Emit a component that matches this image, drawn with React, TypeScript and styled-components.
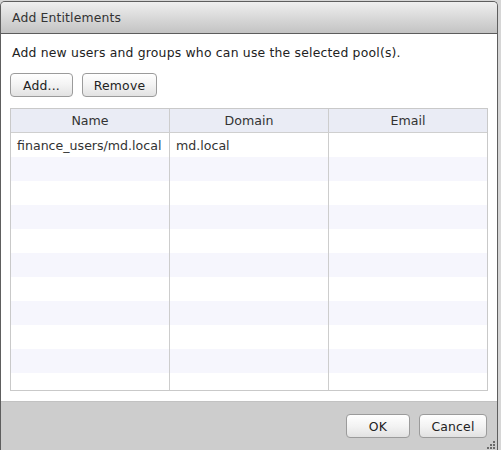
import React from "react";
import styled, { createGlobalStyle } from "styled-components";

const GlobalStyle = createGlobalStyle`
  html, body {
    margin: 0;
    padding: 0;
    background: #d6d6d6;
    font-family: "DejaVu Sans", Verdana, sans-serif;
  }
`;

const Page = styled.div`
  width: 501px;
  height: 450px;
  overflow: hidden;
  padding-top: 1px;
  box-sizing: border-box;
`;

const Dialog = styled.div`
  position: relative;
  width: 498px;
  height: 460px;
  box-sizing: border-box;
  border: 1px solid #5e5e5e;
  border-bottom: none;
  border-radius: 5px 5px 0 0;
  display: flex;
  flex-direction: column;
  overflow: hidden;
`;

const TitleBar = styled.div`
  height: 31px;
  flex: none;
  display: flex;
  align-items: center;
  padding-left: 11px;
  background: linear-gradient(#efefef, #d9d9d9 50%, #c3c3c3);
  border-bottom: 1px solid #5c5c5c;
  font-size: 12.4px;
  letter-spacing: 0.15px;
  color: #333;
`;

const Body = styled.div`
  background: #fff;
  padding: 11px 9px 10px 9px;
  display: flex;
  flex-direction: column;
`;

const Description = styled.p`
  margin: 0 0 0 2px;
  font-size: 12.4px;
  letter-spacing: 0.2px;
  line-height: 16px;
  color: #222;
`;

const ButtonRow = styled.div`
  display: flex;
  gap: 9px;
  margin-top: 12px;
`;

const Button = styled.button<{ $w: number }>`
  width: ${(p) => p.$w}px;
  height: 24px;
  box-sizing: border-box;
  border: 1px solid #9b9b9b;
  border-radius: 4px;
  background: linear-gradient(#ffffff, #f3f3f3 50%, #e2e2e2);
  font-family: "DejaVu Sans", Verdana, sans-serif;
  font-size: 12.4px;
  letter-spacing: 0.2px;
  color: #222;
  padding: 0;
  cursor: pointer;
`;

const Table = styled.div`
  margin-top: 11px;
  height: 283px;
  box-sizing: border-box;
  border: 1px solid #c9c9c9;
  overflow: hidden;
`;

const Row = styled.div<{ $head?: boolean; $alt?: boolean }>`
  display: grid;
  grid-template-columns: 159px 159px 1fr;
  height: 24px;
  box-sizing: border-box;
  background: ${(p) => (p.$head ? "#eaecf5" : p.$alt ? "#f6f6fd" : "#ffffff")};
  border-bottom: ${(p) => (p.$head ? "1px solid #cfcfcf" : "none")};
`;

const Cell = styled.div<{ $head?: boolean; $last?: boolean }>`
  border-right: ${(p) => (p.$last ? "none" : "1px solid #cdcdcd")};
  display: flex;
  align-items: center;
  justify-content: ${(p) => (p.$head ? "center" : "flex-start")};
  padding-left: ${(p) => (p.$head ? "0" : "6px")};
  font-size: 12.6px;
  color: #333;
  white-space: nowrap;
  overflow: hidden;
`;

const Footer = styled.div`
  flex: 1;
  background: #cdcdcd;
  border-top: 1px solid #c2c2c2;
  display: flex;
  justify-content: flex-end;
  align-items: flex-start;
  gap: 9px;
  padding: 12px 10px 0 0;
`;

const Grip = styled.svg`
  position: absolute;
  right: 0;
  top: 438px;
`;

const rows = [
  ["finance_users/md.local", "md.local", ""],
  ...Array.from({ length: 10 }, () => ["", "", ""]),
];

export default function App() {
  return (
    <Page>
      <GlobalStyle />
      <Dialog>
        <TitleBar>Add Entitlements</TitleBar>
        <Body>
          <Description>
            Add new users and groups who can use the selected pool(s).
          </Description>
          <ButtonRow>
            <Button $w={63}>Add...</Button>
            <Button $w={75}>Remove</Button>
          </ButtonRow>
          <Table>
            <Row $head>
              <Cell $head>Name</Cell>
              <Cell $head>Domain</Cell>
              <Cell $head $last>
                Email
              </Cell>
            </Row>
            {rows.map((r, i) => (
              <Row key={i} $alt={i % 2 === 1}>
                <Cell>{r[0]}</Cell>
                <Cell>{r[1]}</Cell>
                <Cell $last>{r[2]}</Cell>
              </Row>
            ))}
          </Table>
        </Body>
        <Footer>
          <Button $w={64}>OK</Button>
          <Button $w={68}>Cancel</Button>
        </Footer>
        <Grip width="11" height="11" viewBox="0 0 11 11">
          <g fill="#6a6a6a">
            <rect x="7" y="1" width="2" height="2" />
            <rect x="4" y="4" width="2" height="2" />
            <rect x="7" y="4" width="2" height="2" />
            <rect x="1" y="7" width="2" height="2" />
            <rect x="4" y="7" width="2" height="2" />
            <rect x="7" y="7" width="2" height="2" />
          </g>
        </Grip>
      </Dialog>
    </Page>
  );
}
